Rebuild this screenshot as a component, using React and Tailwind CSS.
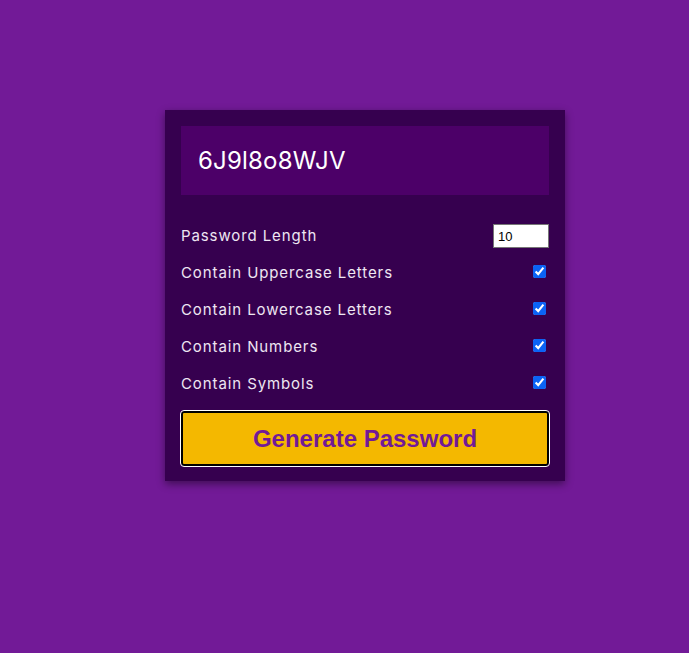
import { useState } from 'react'

const OPTIONS = [
  { id: 'upper', label: 'Contain Uppercase Letters' },
  { id: 'lower', label: 'Contain Lowercase Letters' },
  { id: 'numbers', label: 'Contain Numbers' },
  { id: 'symbols', label: 'Contain Symbols' },
]

export default function App() {
  const [length, setLength] = useState(10)
  const [checked, setChecked] = useState({ upper: true, lower: true, numbers: true, symbols: true })

  return (
    <div className="min-h-[653px] bg-[#721a97] pt-[110px] pl-[165px]" style={{ fontFamily: 'Inter, "Noto Sans", sans-serif' }}>
      <div className="w-[400px] bg-[#36004f] px-4 pt-4 pb-[15px] shadow-[0_3px_8px_rgba(0,0,0,0.45)]">
        <div className="h-[69px] bg-[#4c0068] flex items-center px-[17px] text-[24px] text-white tracking-[0.2px]">
          6J9l8o8WJV
        </div>

        <div className="mt-[29px] flex flex-col gap-[13px] text-[15px] tracking-[0.9px] text-[#eee6f2]">
          <div className="flex items-center justify-between h-[24px]">
            <label>Password Length</label>
            <input
              type="number"
              value={length}
              onChange={e => setLength(e.target.value)}
              className="w-[56px] h-[24px] bg-white text-black text-[13px] tracking-normal px-1 border border-[#767676] outline-none"
              style={{ fontFamily: 'Arial, "Liberation Sans", sans-serif' }}
            />
          </div>
          {OPTIONS.map(opt => (
            <div key={opt.id} className="flex items-center justify-between h-[24px]">
              <label>{opt.label}</label>
              <input
                type="checkbox"
                checked={checked[opt.id]}
                onChange={() => setChecked({ ...checked, [opt.id]: !checked[opt.id] })}
                className="w-[13px] h-[13px] mr-[3px] -mt-[4px] accent-[#0b63f5]"
              />
            </div>
          ))}
        </div>

        <button
          className="mt-[15px] w-full h-[55px] bg-[#f4b800] text-[#721a97] text-[24px] font-bold rounded-[3px] border-2 border-black outline outline-1 outline-white"
          style={{ fontFamily: '"Liberation Sans", Arial, sans-serif' }}
        >
          Generate Password
        </button>
      </div>
    </div>
  )
}
